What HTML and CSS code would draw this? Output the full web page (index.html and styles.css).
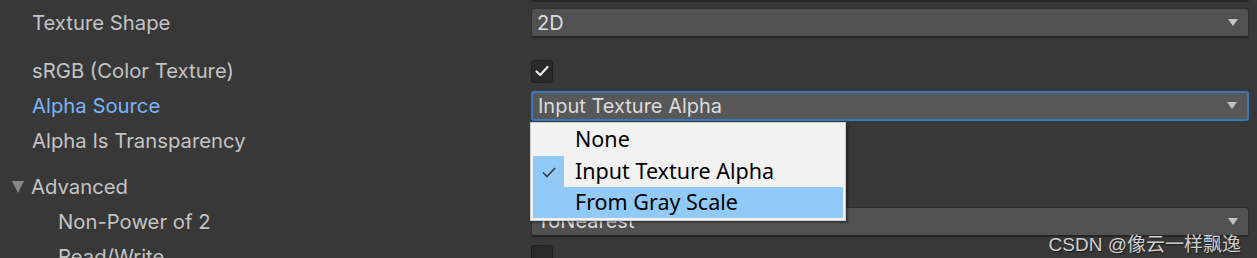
FILE: index.html
```html
<!DOCTYPE html>
<html>
<head>
<meta charset="utf-8">
<link rel="stylesheet" href="styles.css">
</head>
<body>
<div class="inspector">
  <div class="topline"><div class="topline-bar"></div></div>
  <div class="row row-first">
    <div class="label">Texture Shape</div>
    <div class="field"><div class="dropdown"><span class="dd-text">2D</span><span class="arrow"></span></div></div>
  </div>
  <div class="row row-gap">
    <div class="label">sRGB (Color Texture)</div>
    <div class="field"><div class="checkbox"><svg class="tick" viewBox="0 0 16 16" width="16" height="16"><path d="M2.5 8.5 L6.2 12 L13.5 4" fill="none" stroke="#e8e8e8" stroke-width="2.2" stroke-linecap="round" stroke-linejoin="round"/></svg></div></div>
  </div>
  <div class="row">
    <div class="label label-focus">Alpha Source</div>
    <div class="field"><div class="dropdown dropdown-focus"><span class="dd-text">Input Texture Alpha</span><span class="arrow"></span></div></div>
  </div>
  <div class="row">
    <div class="label">Alpha Is Transparency</div>
    <div class="field"><div class="checkbox"></div></div>
  </div>
  <div class="row row-gap2">
    <div class="label label-fold"><span class="fold"></span>Advanced</div>
    <div class="field"></div>
  </div>
  <div class="row">
    <div class="label label-indent">Non-Power of 2</div>
    <div class="field"><div class="dropdown"><span class="dd-text">ToNearest</span><span class="arrow"></span></div></div>
  </div>
  <div class="row">
    <div class="label label-indent">Read/Write</div>
    <div class="field"><div class="checkbox"></div></div>
  </div>

  <div class="menu">
    <div class="menu-item"><span class="check-col"></span><span class="item-text">None</span></div>
    <div class="menu-item menu-item-checked"><span class="check-col"><svg viewBox="0 0 16 16" width="16" height="16"><path d="M2 8.5 L6 12.5 L14 4" fill="none" stroke="#3a3a3a" stroke-width="1.6"/></svg></span><span class="item-text">Input Texture Alpha</span></div>
    <div class="menu-item menu-item-hover"><span class="check-col"></span><span class="item-text">From Gray Scale</span></div>
  </div>

  <div class="watermark">CSDN @像云一样飘逸</div>
</div>
</body>
</html>
```
FILE: styles.css
```css
* { box-sizing: border-box; }
html, body { margin: 0; padding: 0; }
body {
  width: 1257px;
  height: 258px;
  overflow: hidden;
  background: #383838;
  font-family: "Inter", "Noto Sans", sans-serif;
}
.inspector {
  position: relative;
  width: 1257px;
  height: 258px;
  overflow: hidden;
  display: flex;
  flex-direction: column;
}
.topline {
  height: 2px;
  flex: none;
  padding-left: 531px;
  padding-right: 8px;
}
.topline-bar {
  height: 2px;
  background: #262626;
  border-radius: 0 0 3px 3px;
}
.row {
  height: 35px;
  flex: none;
  display: flex;
  align-items: center;
}
.row-first { margin-top: 4px; height: 34px; }
.row-gap { margin-top: 14px; height: 34px; }
.row-gap2 { margin-top: 11px; }
.label {
  width: 531px;
  flex: none;
  padding-left: 32px;
  color: #c4c4c4;
  font-size: 20.3px;
  line-height: 22px;
  white-space: nowrap;
}
.label-focus { color: #7cb3f5; }
.label-indent { padding-left: 58px; }
.label-fold {
  padding-left: 12px;
  display: flex;
  align-items: center;
}
.fold {
  width: 0;
  height: 0;
  border-left: 6.5px solid transparent;
  border-right: 6.5px solid transparent;
  border-top: 12px solid #888888;
  margin-right: 7px;
  margin-top: 1px;
}
.field {
  flex: 1;
  padding-right: 8px;
  display: flex;
  align-items: center;
}
.dropdown {
  width: 718px;
  height: 30px;
  background: #515151;
  border: 1px solid #303030;
  border-bottom: 2px solid #262626;
  border-radius: 3px;
  display: flex;
  align-items: center;
  justify-content: space-between;
  padding: 0 10px 0 5px;
  color: #dcdcdc;
  font-size: 20px;
}
.dropdown-focus {
  background: #585858;
  border: 2px solid #3a79bb;
  padding-left: 5px;
}
.dd-text { white-space: nowrap; }
.arrow {
  width: 0;
  height: 0;
  border-left: 5.5px solid transparent;
  border-right: 5.5px solid transparent;
  border-top: 7px solid #c4c4c4;
}
.checkbox {
  width: 22px;
  height: 23px;
  background: #2a2a2a;
  border: 1px solid #202020;
  border-radius: 3px;
  display: flex;
  align-items: center;
  justify-content: center;
}
.menu {
  position: absolute;
  left: 530px;
  top: 122px;
  width: 316px;
  height: 99px;
  background: #f2f2f2;
  border: 1px solid #cfcfcf;
  padding: 1px 2px 0 2px;
  box-shadow: 2px 2px 2px rgba(0,0,0,0.35);
  font-family: "Noto Sans", "Open Sans", sans-serif;
  font-size: 21.5px;
  color: #000;
}
.menu-item {
  height: 31px;
  display: flex;
  align-items: center;
}
.menu-item:first-child { height: 32px; padding-bottom: 1px; }
.check-col {
  width: 31px;
  height: 100%;
  flex: none;
  display: flex;
  align-items: center;
  justify-content: center;
}
.menu-item-checked .check-col { background: #91c9f7; }
.menu-item-hover { background: #91c9f7; }
.item-text {
  padding-left: 11px;
  padding-bottom: 2px;
  white-space: nowrap;
}
.watermark {
  position: absolute;
  right: 16px;
  top: 229px;
  color: #cfcfcf;
  font-family: "Liberation Sans", "Noto Sans CJK SC", sans-serif;
  font-size: 19px;
  text-shadow: 1px 1px 1px #1a1a1a;
  white-space: nowrap;
}
```
